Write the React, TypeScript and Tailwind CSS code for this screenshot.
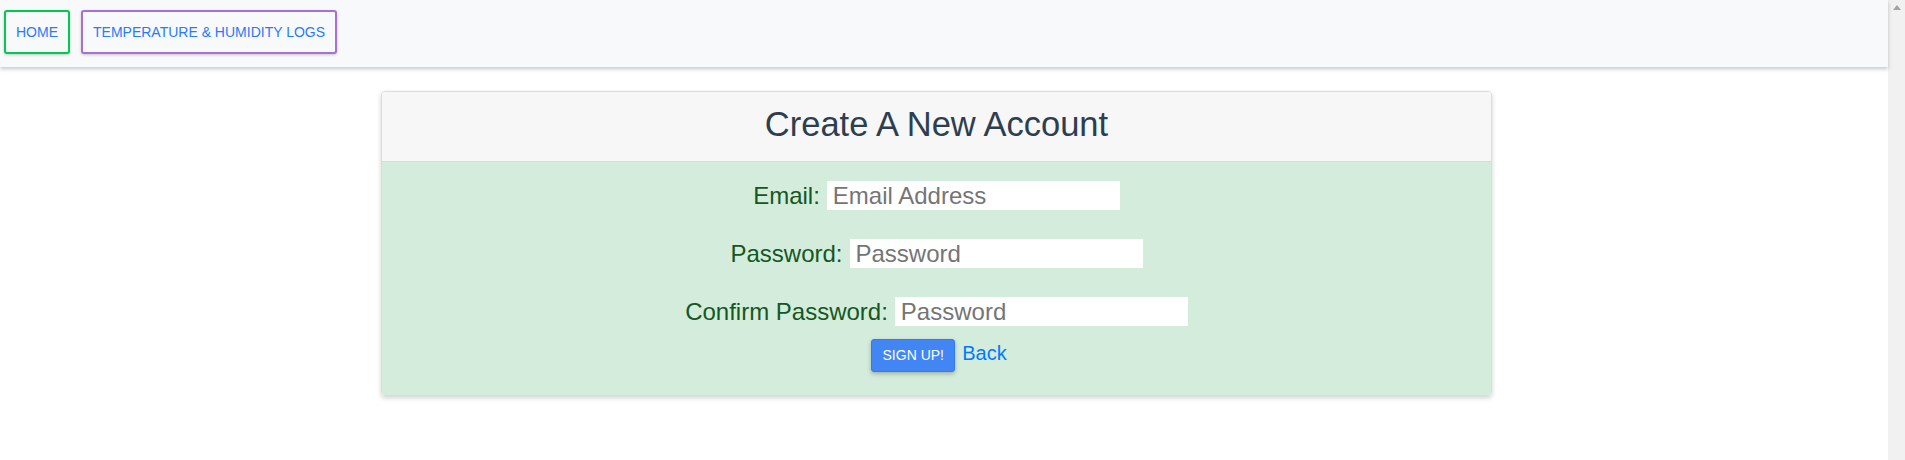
import React from "react";

/** Sign-up page: top nav + "Create A New Account" card. */
export default function App() {
  return (
    <div className="flex min-h-[460px] bg-white font-['Liberation_Sans',Arial,sans-serif]">
      <div className="flex-1">
        <nav className="relative z-10 flex h-[67px] items-start gap-[11px] bg-[#f8f9fa] pl-[4px] pt-[10px] shadow-[0_2px_4px_rgba(0,0,0,0.22)]">
          <NavButton border="border-[#00c853]">Home</NavButton>
          <NavButton border="border-[#a86fd6]">Temperature &amp; Humidity Logs</NavButton>
        </nav>

        <div className="pl-[381px] pt-[24px]">
          <div className="w-[1111px] overflow-hidden rounded-[4px] border border-[#dcdcdc] shadow-[0_2px_5px_rgba(0,0,0,0.18)]">
            {/* header */}
            <div className="flex h-[70px] items-center justify-center border-b border-[#dadada] bg-[#f7f7f7]">
              <h1 className="pb-[4px] text-[34.5px] font-normal leading-none text-[#2c3e50]">
                Create A New Account
              </h1>
            </div>

            {/* form */}
            <form className="flex flex-col items-center gap-[29px] bg-[#d4ecdb] pb-[23px] pt-[19px] text-[24px] text-[#155724]">
              <Field label="Email:" placeholder="Email Address" type="email" />
              <Field label="Password:" placeholder="Password" type="password" />
              <div className="flex flex-col items-center gap-[12px]">
                <Field label="Confirm Password:" placeholder="Password" type="password" />
                <div className="flex items-baseline gap-[7px] pl-[5px]">
                  <button
                    type="button"
                    className="flex h-[33px] w-[84px] items-center justify-center rounded-[3px] border border-[#2f7cf6] bg-[#4285f4] text-[14px] uppercase leading-none text-white shadow-[0_2px_4px_rgba(0,0,0,0.25)]"
                  >
                    Sign up!
                  </button>
                  <a href="#" className="text-[20px] leading-normal text-[#007bff]">
                    Back
                  </a>
                </div>
              </div>
            </form>
          </div>
        </div>
      </div>

      {/* scrollbar */}
      <div className="flex w-[17px] justify-center bg-[#f1f1f1] pt-[5px]">
        <svg width="8" height="5" viewBox="0 0 8 5">
          <path d="M0 5 L4 0 L8 5 Z" fill="#a3a3a3" />
        </svg>
      </div>
    </div>
  );
}

function NavButton({ border, children }: { border: string; children: React.ReactNode }) {
  return (
    <button
      type="button"
      className={`h-[44px] rounded-[3px] border-2 ${border} bg-[#f8f9fa] px-[10px] text-[14px] uppercase leading-none text-[#2979ff] shadow-[0_1px_3px_rgba(0,0,0,0.2)]`}
    >
      {children}
    </button>
  );
}

function Field({ label, placeholder, type }: { label: string; placeholder: string; type: string }) {
  return (
    <div className="flex h-[29px] items-center gap-[7px]">
      <label className="leading-normal">{label}</label>
      <input
        type={type}
        placeholder={placeholder}
        className="h-[29px] w-[293px] bg-white px-[6px] text-[24px] text-black outline-none placeholder:text-[#757575]"
      />
    </div>
  );
}
